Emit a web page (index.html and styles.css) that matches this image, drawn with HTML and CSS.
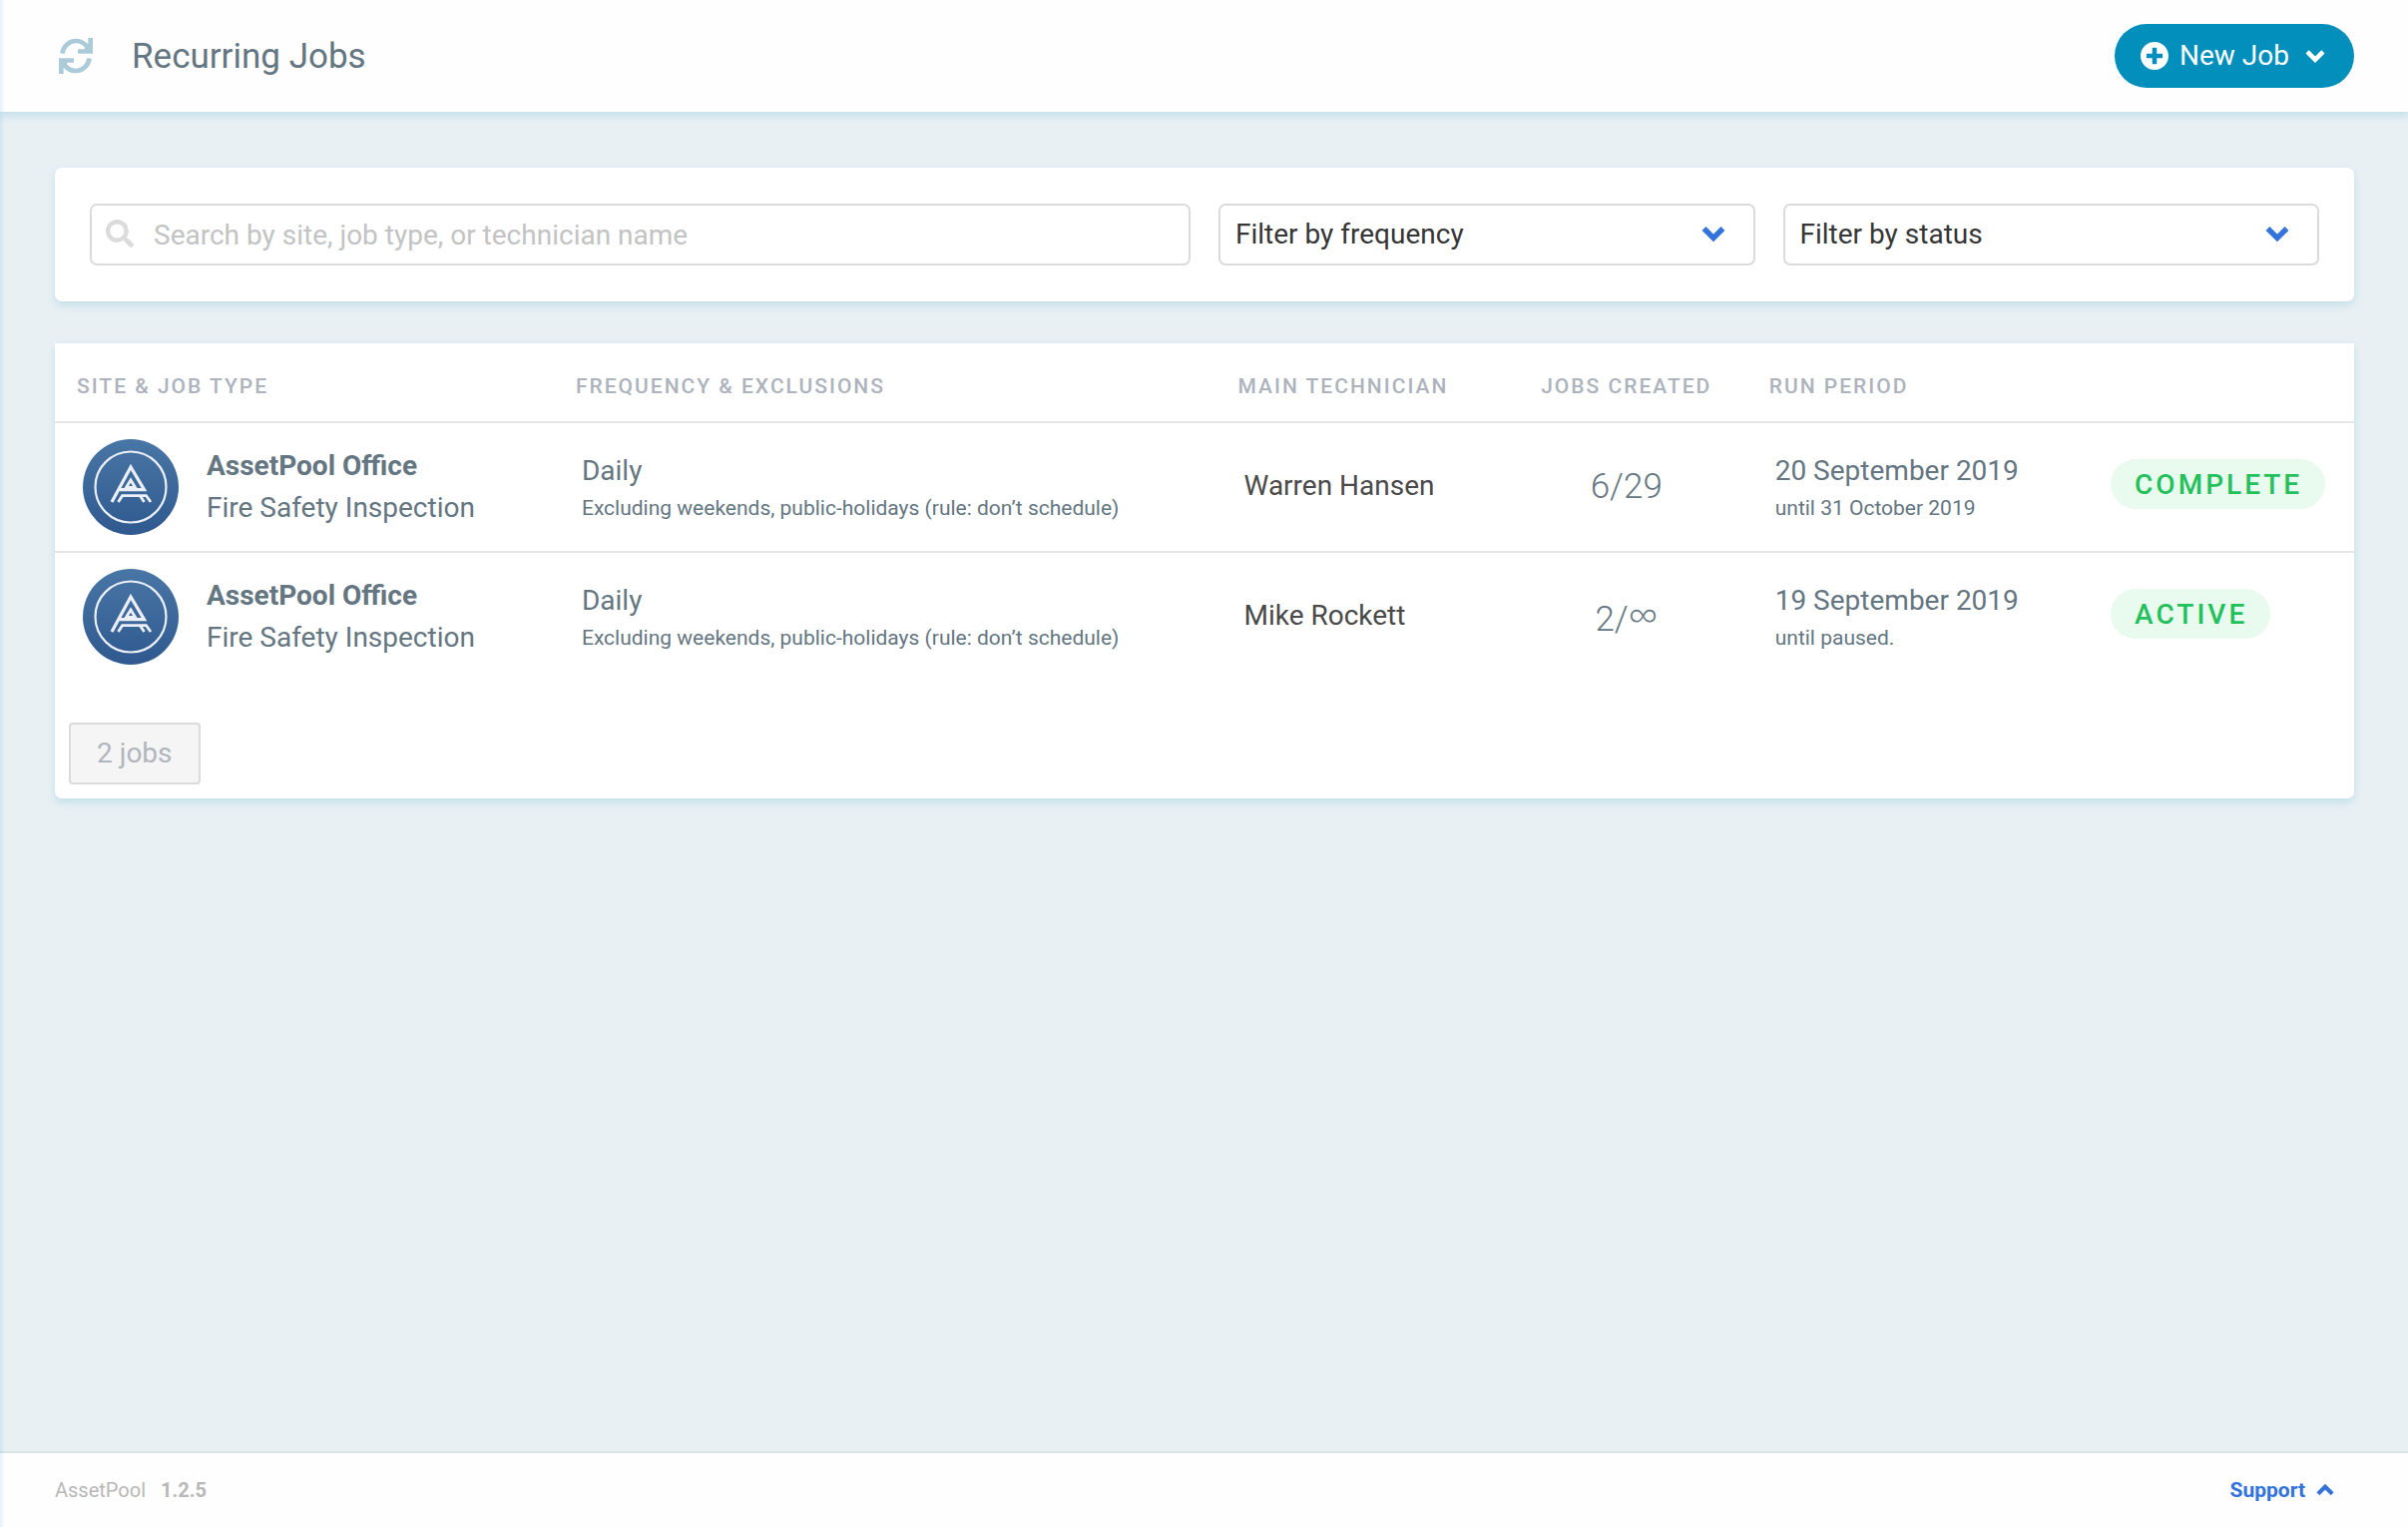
FILE: index.html
```html
<!DOCTYPE html>
<html lang="en">
  <head>
    <meta charset="UTF-8" />
    <meta name="viewport" content="width=device-width, initial-scale=1.0" />
    <link rel="stylesheet" href="styles.css">
    <title>Recurring Jobs</title>
  </head>
  <body>
    <!-- shared icons -->
    <svg class="sprite" aria-hidden="true">
      <symbol id="chevron" viewBox="0 0 24 16">
        <path d="M2.500 3L12 12.400L21.500 3" fill="none" stroke="currentColor" stroke-width="5.500" />
      </symbol>
      <symbol id="logo" viewBox="0 0 96 96">
        <linearGradient id="logo-bg" x1="0" y1="0" x2="0" y2="1">
          <stop offset="0" stop-color="#4876a5" />
          <stop offset="1" stop-color="#2f598f" />
        </linearGradient>
        <circle cx="48" cy="48" r="48" fill="url(#logo-bg)" />
        <g fill="none" stroke="#eceff8" stroke-width="2.800">
          <circle cx="48" cy="48" r="35.500" stroke-width="2.200" />
          <path d="M29 63L48 28L61.500 50.700H37" stroke-width="3.200" />
          <path d="M42.500 50L48 41L53.500 50M45 48.500H51" />
          <path d="M35.500 63L39.500 56.700H63.500L68 63M57.500 57L61.500 63" />
        </g>
      </symbol>
    </svg>

    <header class="header">
      <svg class="header-icon" viewBox="0 0 102 108">
        <g id="half">
          <path d="M10 47C14 24 31 9 51 9C66 9 78 16 87 29" fill="none" stroke="currentColor" stroke-width="14" />
          <path d="M88 0H102V47H57V34H76L84 24L88 18Z" fill="currentColor" />
        </g>
        <use href="#half" transform="rotate(180 51 54)" />
      </svg>
      <h1>Recurring Jobs</h1>
      <button class="new-job" type="button">
        <svg class="plus" viewBox="8 8 496 496"><path fill="currentColor" d="M256 8C119 8 8 119 8 256s111 248 248 248 248-111 248-248S393 8 256 8zm144 276c0 6.600-5.400 12-12 12h-92v92c0 6.600-5.400 12-12 12h-56c-6.600 0-12-5.400-12-12v-92h-92c-6.600 0-12-5.400-12-12v-56c0-6.600 5.400-12 12-12h92v-92c0-6.600 5.400-12 12-12h56c6.600 0 12 5.400 12 12v92h92c6.600 0 12 5.400 12 12v56z" /></svg>
        New Job
        <svg class="arrow"><use href="#chevron" /></svg>
      </button>
    </header>

    <main class="main">
      <form class="card filters">
        <div class="field search">
          <svg viewBox="0 0 512 512"><path fill="currentColor" d="M505 442.700L405.300 343c-4.500-4.500-10.600-7-17-7H372c27.600-35.300 44-79.700 44-128C416 93.100 322.900 0 208 0S0 93.100 0 208s93.100 208 208 208c48.300 0 92.700-16.400 128-44v16.300c0 6.400 2.500 12.500 7 17l99.700 99.700c9.400 9.400 24.600 9.400 33.900 0l28.300-28.300c9.400-9.400 9.400-24.600.1-34zM208 336c-70.700 0-128-57.200-128-128 0-70.700 57.200-128 128-128 70.700 0 128 57.200 128 128 0 70.700-57.200 128-128 128z" /></svg>
          <input type="text" aria-label="Search" placeholder="Search by site, job type, or technician name" />
        </div>
        <div class="field select">
          <select aria-label="Frequency">
            <option>Filter by frequency</option>
          </select>
          <svg><use href="#chevron" /></svg>
        </div>
        <div class="field select">
          <select aria-label="Status">
            <option>Filter by status</option>
          </select>
          <svg><use href="#chevron" /></svg>
        </div>
      </form>

      <section class="card jobs">
        <table>
          <colgroup>
            <col class="col-site" />
            <col class="col-frequency" />
            <col class="col-technician" />
            <col class="col-created" />
            <col class="col-period" />
            <col />
          </colgroup>
          <thead>
            <tr>
              <th>Site &amp; Job Type</th>
              <th>Frequency &amp; Exclusions</th>
              <th>Main Technician</th>
              <th class="created">Jobs Created</th>
              <th>Run Period</th>
              <th></th>
            </tr>
          </thead>
          <tbody>
            <tr>
              <td>
                <div class="site">
                  <svg><use href="#logo" /></svg>
                  <div><strong>AssetPool Office</strong><p>Fire Safety Inspection</p></div>
                </div>
              </td>
              <td><p>Daily</p><small>Excluding weekends, public-holidays (rule: don’t schedule)</small></td>
              <td class="technician">Warren Hansen</td>
              <td class="created">6/29</td>
              <td><p>20 September 2019</p><small>until 31 October 2019</small></td>
              <td class="status"><span class="tag">Complete</span></td>
            </tr>
            <tr>
              <td>
                <div class="site">
                  <svg><use href="#logo" /></svg>
                  <div><strong>AssetPool Office</strong><p>Fire Safety Inspection</p></div>
                </div>
              </td>
              <td><p>Daily</p><small>Excluding weekends, public-holidays (rule: don’t schedule)</small></td>
              <td class="technician">Mike Rockett</td>
              <td class="created">2/<span class="infinity">∞</span></td>
              <td><p>19 September 2019</p><small>until paused.</small></td>
              <td class="status"><span class="tag">Active</span></td>
            </tr>
          </tbody>
        </table>
        <div class="pager">
          <button type="button" disabled>2 jobs</button>
        </div>
      </section>
    </main>

    <footer class="footer">
      <p>AssetPool <b>1.2.5</b></p>
      <a href="#">Support <svg><use href="#chevron" /></svg></a>
    </footer>
  </body>
</html>
```
FILE: styles.css
```css
* {
  margin: 0;
  padding: 0;
  box-sizing: border-box;
}
body {
  display: flex;
  flex-direction: column;
  min-height: 100vh;
  background-color: #e8f0f4;
  color: #647681;
  font-family: Roboto, "Liberation Sans", sans-serif;
  font-size: 28px;
  line-height: 42px;
}
/* soft edge on the left of the page */
body::before {
  content: "";
  position: absolute;
  top: 0;
  bottom: 0;
  left: 0;
  width: 5px;
  background: linear-gradient(to right, rgba(0, 136, 190, 0.1), transparent);
}
button,
input,
select {
  font: inherit;
}
.sprite {
  position: absolute;
  width: 0;
  height: 0;
}

.header {
  display: flex;
  align-items: center;
  height: 112px;
  padding: 0 54px 0 59px;
  background-color: #fefefe;
  box-shadow: 0 4px 8px rgba(0, 136, 178, 0.16);
}
.header-icon {
  width: 34px;
  height: 36px;
  margin-right: 39px;
  color: #abcbd9;
}
.header h1 {
  padding-top: 2px;
  font-size: 35px;
  font-weight: 400;
}
.new-job {
  display: flex;
  align-items: center;
  height: 64px;
  margin-left: auto;
  padding: 0 29px 0 26px;
  border: none;
  border-radius: 32px;
  background-color: #028fbc;
  color: white;
  cursor: pointer;
}
.new-job .plus {
  width: 28px;
  height: 28px;
  margin-right: 11px;
}
.new-job .arrow {
  width: 20px;
  height: 14px;
  margin-left: 16px;
}

.main {
  flex: 1;
  padding: 56px 54px 56px 55px;
}
.card {
  border-radius: 7px;
  background-color: white;
  box-shadow: 0 4px 8px rgba(0, 136, 178, 0.16);
}

.filters {
  display: grid;
  grid-template-columns: repeat(4, 1fr);
  gap: 28px;
  margin-bottom: 42px;
  padding: 36px 35px;
}
.field {
  position: relative;
}
.search {
  grid-column: span 2;
}
.field input,
.field select {
  display: block;
  width: 100%;
  height: 62px;
  border: 2px solid #dbdbdb;
  border-radius: 7px;
  background-color: white;
  color: #363636;
}
.field input {
  padding: 0 20px 0 62px;
}
.field input::placeholder {
  color: #c3c3c3;
}
.field select {
  padding: 0 60px 0 15px;
  appearance: none;
}
.field svg {
  position: absolute;
  pointer-events: none;
}
.search svg {
  top: 16px;
  left: 16px;
  width: 28px;
  height: 28px;
  color: #dbdbdb;
}
.select svg {
  top: 22px;
  right: 30px;
  width: 24px;
  height: 16px;
  color: #3273dc;
}

.jobs {
  border-radius: 0 0 7px 7px;
}
.jobs table {
  width: 100%;
  border-spacing: 0;
  table-layout: fixed;
}
.col-site {
  width: 21.7%;
}
.col-frequency {
  width: 28.8%;
}
.col-technician {
  width: 12.6%;
}
.col-created {
  width: 10.5%;
}
.col-period {
  width: 14.6%;
}
.jobs th {
  height: 78px;
  padding: 7px 0 0 22px;
  color: #adb3bd;
  font-size: 21px;
  font-weight: 500;
  letter-spacing: 2px;
  line-height: 32px;
  text-align: left;
  text-transform: uppercase;
}
.jobs td {
  height: 130px;
  padding: 16px 0 16px 28px;
  border-top: 2px solid #e6e6e6;
  vertical-align: middle;
}
.jobs small {
  display: block;
  font-size: 21px;
  line-height: 32px;
}
.site {
  display: flex;
  align-items: center;
  gap: 28px;
}
.site svg {
  width: 96px;
  height: 96px;
}
.site strong {
  font-weight: 700;
}
.jobs .technician {
  padding-bottom: 18px;
  color: #4a4a4a;
}
.jobs .created {
  padding-left: 0;
  text-align: center;
}
td.created {
  font-size: 35px;
  font-weight: 300;
}
.infinity {
  font-family: "Open Sans", "Noto Sans", sans-serif;
  font-size: 42px;
  line-height: 1;
}
.jobs .status {
  padding-bottom: 22px;
}
.tag {
  display: inline-block;
  padding: 2px 23px 0 24px;
  border-radius: 25px;
  background-color: #e9faef;
  color: #23c05b;
  font-weight: 500;
  letter-spacing: 3px;
  line-height: 48px;
  text-transform: uppercase;
}
.pager {
  padding: 42px 14px 14px;
}
.pager button {
  display: block;
  height: 62px;
  padding: 0 26px;
  border: 2px solid #dbdbdb;
  border-radius: 4px;
  background-color: #f5f5f5;
  color: #b0b5be;
}

.footer {
  display: flex;
  align-items: center;
  justify-content: space-between;
  height: 76px;
  padding: 0 74px 0 55px;
  border-top: 2px solid #dae3e7;
  background-color: #fefefe;
  color: #b8b8b8;
  font-size: 20px;
}
.footer b {
  margin-left: 10px;
}
.footer a {
  display: flex;
  align-items: center;
  gap: 11px;
  color: #3273dc;
  font-size: 21px;
  font-weight: 700;
  text-decoration: none;
}
.footer svg {
  width: 18px;
  height: 12px;
  transform: rotate(180deg);
}
```
